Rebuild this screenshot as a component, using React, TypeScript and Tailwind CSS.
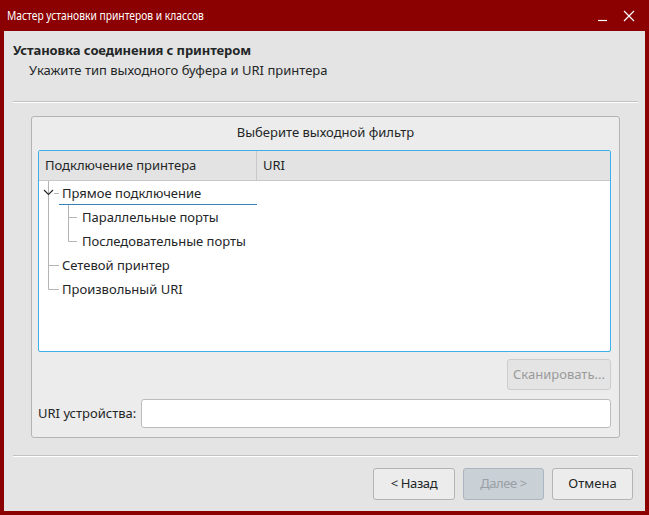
import React from "react";

export default function App() {
  return (
    <div
      className="w-[649px] h-[515px] bg-[#8b0000] flex flex-col px-[4px] pb-[4px] text-[13px] text-[#232627]"
      style={{ fontFamily: '"Noto Sans", "DejaVu Sans", sans-serif' }}
    >
      {/* title bar */}
      <div className="h-[31px] flex items-center shrink-0">
        <span className="ml-[3px] inline-block text-white text-[13px] scale-x-[0.79] origin-left whitespace-nowrap">Мастер установки принтеров и классов</span>
        <div className="ml-auto flex items-center gap-[14px] mr-[10px] text-white">
          <svg width="12" height="12" viewBox="0 0 12 12"><path d="M1 10.5 H10" stroke="white" strokeWidth="1.2" /></svg>
          <svg width="12" height="12" viewBox="0 0 12 12"><path d="M1 1 L11 11 M11 1 L1 11" stroke="white" strokeWidth="1.2" /></svg>
        </div>
      </div>
      {/* content */}
      <div className="flex-1 bg-[#e4e4e4] flex flex-col">
        <div className="pl-[9px] pt-[9px]">
          <div className="font-bold text-[13px] leading-[20px] tracking-[-0.1px]">Установка соединения с принтером</div>
          <div className="pl-[16px] leading-[20px]">Укажите тип выходного буфера и URI принтера</div>
        </div>
        <div className="mt-[21px] ml-[9px] mr-[7px] h-[2px] border-t border-[#c2c2c2] border-b border-b-white" />
        {/* group */}
        <div className="mt-[13px] ml-[27px] mr-[25px] h-[322px] bg-[#ececec] border border-[#b4b4b4] rounded-[3px] flex flex-col px-[6px]">
          <div className="h-[30px] flex items-center justify-center pt-[2px]">Выберите выходной фильтр</div>
          <div className="mt-[3px] h-[202px] mr-[2px] border border-[#3daee9] rounded-[2px] bg-white flex flex-col overflow-hidden">
            <div className="h-[30px] bg-[#e3e3e3] border-b border-[#c8c8c8] flex shrink-0">
              <div className="w-[218px] border-r border-[#c8c8c8] flex items-center pl-[6px]">Подключение принтера</div>
              <div className="flex items-center pl-[6px]">URI</div>
            </div>
            <div className="relative flex-1">
              <svg className="absolute left-0 top-0" width="230" height="130" viewBox="0 0 230 130">
                <g stroke="#b4b4b4" strokeWidth="1" fill="none">
                  <path d="M9.5 0 V108.5 H20" />
                  <path d="M9.5 84.5 H20" />
                  <path d="M15 12.5 H20" />
                  <path d="M29.5 24 V60.5 H38" />
                  <path d="M29.5 36.5 H38" />
                </g>
                <path d="M5 9 L9.5 13.5 L14 9" stroke="#232627" strokeWidth="1.1" fill="none" />
              </svg>
              <div className="absolute left-[20px] top-0 w-[198px] h-[24px] border-b border-[#3a7fb4]" />
              <div className="absolute left-[23px] top-[2px] leading-[20px]">Прямое подключение</div>
              <div className="absolute left-[43px] top-[26px] leading-[20px]">Параллельные порты</div>
              <div className="absolute left-[43px] top-[50px] leading-[20px]">Последовательные порты</div>
              <div className="absolute left-[23px] top-[74px] leading-[20px]">Сетевой принтер</div>
              <div className="absolute left-[23px] top-[98px] leading-[20px]">Произвольный URI</div>
            </div>
          </div>
          <div className="flex justify-end mt-[7px] mr-[2px]">
            <div className="w-[104px] h-[31px] border border-[#cdcdcd] rounded-[3px] bg-[#e4e4e4] flex items-center justify-center text-[#9a9a9a]">Сканировать...</div>
          </div>
          <div className="flex items-center mt-[9px] mr-[2px]">
            <span>URI устройства:</span>
            <div className="ml-auto w-[470px] h-[29px] bg-white border border-[#bcbcbc] rounded-[3px]" />
          </div>
        </div>
        <div className="mt-[17px] ml-[9px] mr-[7px] h-[2px] border-t border-[#c2c2c2] border-b border-b-white" />
        <div className="flex justify-end gap-[8px] mr-[12px] mt-[11px]">
          <div className="w-[82px] h-[32px] border border-[#b4b4b4] rounded-[3px] bg-[#ececec] flex items-center justify-center tracking-[-0.4px]">&lt; Назад</div>
          <div className="w-[81px] h-[32px] border border-[#a9b6c2] rounded-[3px] bg-[#c9d0d6] flex items-center justify-center text-[#9aa0a5] tracking-[-0.4px]">Далее &gt;</div>
          <div className="w-[81px] h-[32px] border border-[#b4b4b4] rounded-[3px] bg-[#ececec] flex items-center justify-center">Отмена</div>
        </div>
      </div>
    </div>
  );
}
